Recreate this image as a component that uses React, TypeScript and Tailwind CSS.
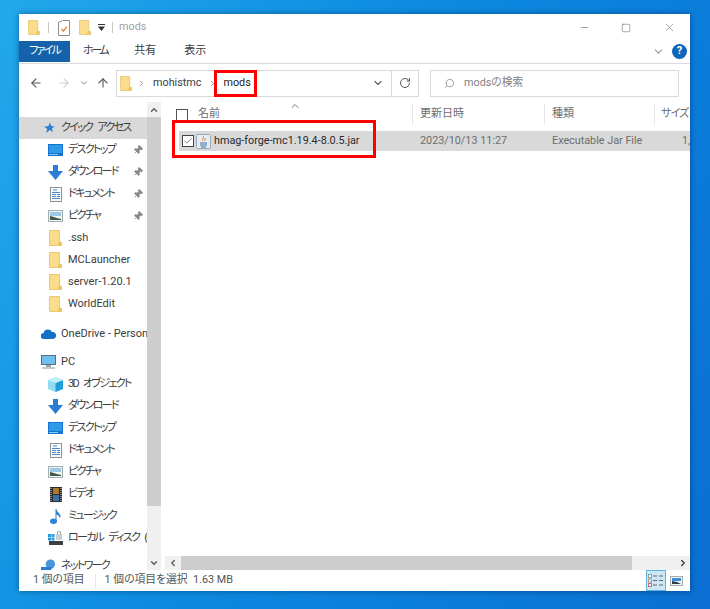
import React from 'react';
import { ArrowLeft, ArrowRight, ArrowUp, ChevronDown, ChevronLeft, ChevronRight, ChevronUp, Minus, Square, X, RotateCw, Search, Pin, Check } from 'lucide-react';

const Folder = ({ className = 'w-[13px] h-[16px]' }: { className?: string }) => (
  <svg viewBox="0 0 13 16" className={className}>
    <path d="M0.5 0.5h10v12h2v3h-12z" fill="#fbdc8a" stroke="#e6c877" />
    <path d="M10.5 11l2 1.5h-2z" fill="#e2b94f" />
    <rect x="9" y="12.5" width="3.5" height="3" fill="#eec45f" />
  </svg>
);

const Star = () => (
  <svg viewBox="0 0 12 12" className="w-[12px] h-[12px]">
    <path d="M7 0.5l1.2 3.5 3.5 0.2-2.8 2.3 1 3.6L6.8 8 3.2 11l1-4L1 4.5l4.3-0.3z" fill="#2d7fd3" />
  </svg>
);

const Desktop = () => (
  <svg viewBox="0 0 15 12" className="w-[15px] h-[12px]">
    <rect x="0" y="0" width="15" height="12" fill="#1673cf" />
    <rect x="1" y="1" width="13" height="8" fill="#2f9be8" />
    <rect x="1" y="10" width="9" height="1" fill="#8cc8f2" />
  </svg>
);

const Download = () => (
  <svg viewBox="0 0 15 15" className="w-[15px] h-[15px]">
    <path d="M5 0h5v6h5l-7.5 9L0 6h5z" fill="#2b7cd3" />
  </svg>
);

const Doc = () => (
  <svg viewBox="0 0 12 15" className="w-[12px] h-[15px]">
    <rect x="0.5" y="0.5" width="11" height="14" fill="#f7f9fb" stroke="#8d9299" />
    <path d="M3 3h4M2 5.5h8M2 7.5h4M7 7.5h3M2 9.5h4M7 9.5h3M2 11.5h8" stroke="#4a87c6" strokeWidth="1" />
  </svg>
);

const Picture = () => (
  <svg viewBox="0 0 15 12" className="w-[15px] h-[12px]">
    <rect x="0.5" y="0.5" width="14" height="11" fill="#f2f3f4" stroke="#a6abb0" />
    <rect x="2" y="2" width="11" height="4" fill="#9cc8e8" />
    <path d="M2 6l4 1 3 1 4 1v1H2z" fill="#3f5d44" />
  </svg>
);

const Cloud = () => (
  <svg viewBox="0 0 15 10" className="w-[15px] h-[10px]">
    <path d="M3 10a3 3 0 0 1-.4-6A4.5 4.5 0 0 1 11 3a3.5 3.5 0 0 1 1 7z" fill="#1372c8" />
  </svg>
);

const Pc = () => (
  <svg viewBox="0 0 15 14" className="w-[15px] h-[14px]">
    <rect x="0.5" y="0.5" width="14" height="9" fill="#6fc0f0" stroke="#5a6d80" />
    <rect x="5" y="10" width="5" height="2" fill="#9aa5ae" />
    <rect x="1" y="12" width="13" height="2" fill="#c3cad0" />
  </svg>
);

const Cube = () => (
  <svg viewBox="0 0 15 15" className="w-[15px] h-[15px]">
    <path d="M7.5 0L15 3v9l-7.5 3L0 12V3z" fill="#8fdcf2" />
    <path d="M7.5 6L15 3v9l-7.5 3z" fill="#1e9fd8" />
    <path d="M7.5 0L15 3 7.5 6 0 3z" fill="#c4eef8" />
  </svg>
);

const Video = () => (
  <svg viewBox="0 0 12 15" className="w-[12px] h-[15px]">
    <rect width="12" height="15" fill="#2a2a2a" />
    <rect x="3" y="1" width="6" height="6" fill="#b07a2c" />
    <rect x="3" y="8" width="6" height="6" fill="#3f6ea8" />
    <path d="M1 1v13M11 1v13" stroke="#ddd" strokeDasharray="1 1" />
  </svg>
);

const Music = () => (
  <svg viewBox="0 0 11 15" className="w-[11px] h-[15px]">
    <ellipse cx="3.5" cy="12.3" rx="3.5" ry="2.7" fill="#2b82d9" />
    <path d="M5.5 12V0h1c0 3 4 4 4 7.5 0 1-.3 1.5-.7 2 0-2.5-2-3.5-3.3-4V12z" fill="#2b82d9" />
  </svg>
);

const Disk = () => (
  <svg viewBox="0 0 15 14" className="w-[15px] h-[14px]">
    <rect x="0" y="3" width="3" height="3" fill="#2b9be0" />
    <rect x="3.5" y="3" width="3" height="3" fill="#2b9be0" />
    <rect x="0" y="6.5" width="3" height="3" fill="#2b9be0" />
    <rect x="3.5" y="6.5" width="3" height="3" fill="#2b9be0" />
    <rect x="8" y="3" width="6" height="6" fill="#c9ced3" />
    <path d="M9.5 3V1.5a1.5 1.5 0 0 1 3 0V3" fill="none" stroke="#8c9299" />
    <rect x="1" y="10" width="14" height="4" fill="#3b3f44" />
  </svg>
);

const Network = () => (
  <svg viewBox="0 0 16 14" className="w-[16px] h-[14px]">
    <circle cx="10" cy="5" r="5" fill="#4a95d8" />
    <rect x="0" y="8" width="11" height="6" fill="#2b7cd3" />
  </svg>
);

const JarIcon = () => (
  <svg viewBox="0 0 15 15" className="w-[15px] h-[15px]">
    <rect x="0.5" y="0.5" width="14" height="14" rx="1" fill="#e6edf4" stroke="#9aa8b6" />
    <path d="M7 2c2 2-2 3 0 5M9 4c1 1-1 2 0 3" fill="none" stroke="#d9822b" />
    <path d="M4 9h7M4 11h7M5 13h5" stroke="#3d6ea5" />
  </svg>
);

const DetailsViewIcon = () => (
  <svg viewBox="0 0 16 13" className="w-[16px] h-[13px]">
    <rect x="0.5" y="0.5" width="3" height="3" fill="#fff" stroke="#999" />
    <rect x="0.5" y="5" width="3" height="3" fill="#fff" stroke="#999" />
    <rect x="0.5" y="9.5" width="3" height="3" fill="#fff" stroke="#d66" />
    <path d="M5 2h4M11 2h4M5 6.5h4M11 6.5h4M5 11h4M11 11h4" stroke="#666" />
  </svg>
);

const LargeViewIcon = () => (
  <svg viewBox="0 0 13 10" className="w-[13px] h-[10px]">
    <rect x="0.5" y="0.5" width="12" height="9" fill="#f2f3f4" stroke="#a6abb0" />
    <rect x="2" y="2" width="9" height="3" fill="#3d8fd8" />
    <path d="M2 5l5 1 4 2H2z" fill="#2f3f4c" />
  </svg>
);

type NavItem = { label: string; icon: React.ReactNode; pin?: boolean; kana?: boolean };

const quickItems: NavItem[] = [
  { label: 'デスクトップ', icon: <Desktop />, pin: true, kana: true },
  { label: 'ダウンロード', icon: <Download />, pin: true, kana: true },
  { label: 'ドキュメント', icon: <Doc />, pin: true, kana: true },
  { label: 'ピクチャ', icon: <Picture />, pin: true, kana: true },
  { label: '.ssh', icon: <Folder /> },
  { label: 'MCLauncher', icon: <Folder /> },
  { label: 'server-1.20.1', icon: <Folder /> },
  { label: 'WorldEdit', icon: <Folder /> },
];

const pcItems: NavItem[] = [
  { label: '3D オブジェクト', icon: <Cube />, kana: true },
  { label: 'ダウンロード', icon: <Download />, kana: true },
  { label: 'デスクトップ', icon: <Desktop />, kana: true },
  { label: 'ドキュメント', icon: <Doc />, kana: true },
  { label: 'ピクチャ', icon: <Picture />, kana: true },
  { label: 'ビデオ', icon: <Video />, kana: true },
  { label: 'ミュージック', icon: <Music />, kana: true },
  { label: 'ローカル ディスク (C:)', icon: <Disk />, kana: true },
];

const NavRow = ({ label, icon, pin, kana }: NavItem) => (
  <div className="flex items-center h-[22px] pl-[29px] text-[#3c3c3c]">
    <span className="w-[15px] flex justify-center shrink-0">{icon}</span>
    <span className={`ml-[5px] pt-px whitespace-pre flex-1 text-[11px] ${kana ? 'tracking-[-1.7px] [word-spacing:4px]' : ''}`}>{label}</span>
    {pin && <Pin size={10} className="mr-[4px] text-[#8a8a8a] rotate-45" fill="#8a8a8a" />}
  </div>
);

const TopRow = ({ label, icon, active, kana }: { label: string; icon: React.ReactNode; active?: boolean; kana?: boolean }) => (
  <div className={`flex items-center h-[22px] pl-[22px] text-[#3c3c3c] ${active ? 'bg-[#d9d9d9]' : ''}`}>
    <span className="w-[15px] flex justify-center shrink-0">{icon}</span>
    <span className={`ml-[5px] pt-px whitespace-pre text-[11px] ${kana ? 'tracking-[-1.7px] [word-spacing:4px]' : ''}`}>{label}</span>
  </div>
);

export default function App() {
  return (
    <div
      className="w-[710px] h-[609px] overflow-hidden pl-[19px] pt-[14px] bg-[linear-gradient(115deg,#22a8ec_0%,#0c8ae0_45%,#0a6fd2_100%)] text-[10.8px] [font-family:'Roboto','Noto_Sans_CJK_JP',sans-serif] [font-feature-settings:'palt']"
    >
      <div className="w-[671px] h-[577px] bg-white flex flex-col shadow-[0_0_6px_rgba(0,0,40,0.4)]">
        {/* title bar */}
        <div className="h-[27px] flex items-center shrink-0 pl-[9px]">
          <Folder className="w-[12px] h-[15px]" />
          <div className="w-px h-[11px] bg-[#c8c8c8] ml-[8px]" />
          <svg viewBox="0 0 12 16" className="w-[12px] h-[16px] ml-[9px]">
            <path d="M0.5 2.5l4-2h7v15h-11z" fill="#fff" stroke="#8d8d8d" />
            <path d="M3.5 9l2 2 3.5-4.5" fill="none" stroke="#d9762b" strokeWidth="1.2" />
          </svg>
          <Folder className="w-[12px] h-[15px] ml-[9px]" />
          <svg viewBox="0 0 7 7" className="w-[7px] h-[7px] ml-[7px]">
            <path d="M0 0h7v1H0zM0 2.5h7L3.5 7z" fill="#333" />
          </svg>
          <div className="w-px h-[11px] bg-[#c8c8c8] ml-[7px]" />
          <span className="ml-[6px] text-[#a0a0a0]">mods</span>
          <div className="flex-1" />
          <Minus size={11} className="text-[#9a9a9a] mr-[31px]" />
          <Square size={10} strokeWidth={1.2} className="text-[#555] mr-[32px]" />
          <X size={13} strokeWidth={1.1} className="text-[#777] mr-[14px]" />
        </div>

        {/* ribbon tabs */}
        <div className="h-[23px] flex items-center shrink-0 border-b border-[#dadbdc] pb-px">
          <div className="w-[51px] h-[21px] flex items-center justify-center bg-[#1562ab] text-white text-[11px] tracking-[-1.8px]">ファイル</div>
          <span className="ml-[13px] text-[#3c3c3c] text-[11px] tracking-[-2.4px]">ホーム</span>
          <span className="ml-[27px] text-[#3c3c3c] text-[11px]">共有</span>
          <span className="ml-[28px] text-[#3c3c3c] text-[11px]">表示</span>
          <div className="flex-1" />
          <ChevronDown size={13} className="text-[#9a9a9a] mr-[7px]" />
          <div className="w-[15px] h-[15px] rounded-full bg-[#0f66b8] text-white text-[11px] font-bold flex items-center justify-center mr-[3px]">?</div>
        </div>

        {/* address row */}
        <div className="h-[38px] flex items-center shrink-0">
          <ArrowLeft size={14} className="ml-[10px] text-[#5c5c5c]" />
          <ArrowRight size={14} className="ml-[14px] text-[#cfcfcf]" />
          <ChevronDown size={10} className="ml-[8px] text-[#6c6c6c]" />
          <ArrowUp size={14} className="ml-[7px] text-[#5c5c5c]" />
          <div className="ml-[6px] w-[303px] h-[27px] flex items-center border border-[#d9d9d9]">
            <Folder className="w-[12px] h-[15px] ml-[3px]" />
            <ChevronRight size={9} className="ml-[5px] text-[#777]" />
            <span className="ml-[7px] text-[#3c3c3c]">mohistmc</span>
            <ChevronRight size={9} className="ml-[7px] text-[#777]" />
            <span className="relative ml-[6px] text-[#222] leading-[16px]">
              mods
              <div className="absolute -left-[9px] -right-[6px] -top-[5px] -bottom-[6px] border-[3px] border-[#ff0000]" />
            </span>
            <div className="flex-1" />
            <ChevronDown size={12} strokeWidth={2.5} className="text-[#666] mr-[7px]" />
            <div className="w-px h-full bg-[#d9d9d9]" />
            <RotateCw size={12} className="text-[#555] mx-[7px]" />
          </div>
          <div className="ml-[11px] w-[249px] h-[27px] flex items-center border border-[#d9d9d9]">
            <Search size={11} className="ml-[13px] text-[#999] -scale-x-100" />
            <span className="ml-[9px] text-[#7f7f7f]">modsの検索</span>
          </div>
        </div>

        {/* body */}
        <div className="flex flex-1 min-h-0">
          <div className="flex shrink-0">
            <div className="w-[128px] pt-[15px] overflow-hidden">
              <TopRow label="クイック アクセス" icon={<Star />} active kana />
              <div>
                {quickItems.map((item) => (
                  <NavRow key={item.label} {...item} />
                ))}
              </div>
              <div className="mt-[8px]">
                <TopRow label="OneDrive - Personal" icon={<Cloud />} />
              </div>
              <div className="mt-[6px]">
                <TopRow label="PC" icon={<Pc />} />
              </div>
              {pcItems.map((item) => (
                <NavRow key={item.label} {...item} />
              ))}
              <div className="mt-[6px]">
                <TopRow label="ネットワーク" icon={<Network />} kana />
              </div>
            </div>
            <div className="w-[14px] bg-[#f0f0f0] flex flex-col">
              <div className="h-[15px] flex items-center justify-center">
                <ChevronUp size={10} strokeWidth={3} className="text-[#555]" />
              </div>
              <div className="h-[389px] bg-[#cdcdcd]" />
              <div className="flex-1" />
              <div className="h-[14px] flex items-center justify-center">
                <ChevronDown size={10} strokeWidth={3} className="text-[#555]" />
              </div>
            </div>
          </div>

          <div className="ml-[4px] flex-1 min-w-0 flex flex-col">
            {/* column headers */}
            <div className="relative h-[23px] pt-[2px] flex text-[#6d6d6d] text-[11px] shrink-0 overflow-hidden">
              <ChevronUp size={12} className="absolute left-[124px] -top-[2px] text-[#777]" />
              <div className="w-[248px] shrink-0 flex items-center pl-[11px] border-r border-[#e5e5e5]">
                <span className="w-[12px] h-[12px] border border-[#555] shrink-0" />
                <span className="ml-[10px]">名前</span>
              </div>
              <div className="w-[132px] shrink-0 flex items-center pl-[7px] border-r border-[#e5e5e5]">更新日時</div>
              <div className="w-[110px] shrink-0 flex items-center pl-[7px] border-r border-[#e5e5e5]">種類</div>
              <div className="flex-1 flex items-center pl-[6px] whitespace-nowrap tracking-[-0.8px]">サイズ</div>
            </div>

            {/* file row */}
            <div className="relative mt-[6px] ml-[14px] h-[20px] flex items-center bg-[#d9d9d9] shrink-0">
              <span className="ml-[3px] w-[12px] h-[12px] border border-[#444] bg-white flex items-center justify-center shrink-0">
                <Check size={10} strokeWidth={1.5} className="text-[#333]" />
              </span>
              <span className="ml-[2px]"><JarIcon /></span>
              <span className="ml-[3px] w-[206px] text-[#2b2b2b] whitespace-nowrap shrink-0">hmag-forge-mc1.19.4-8.0.5.jar</span>
              <span className="w-[132px] text-[#6d6d6d] shrink-0">2023/10/13 11:27</span>
              <span className="w-[130px] text-[#6d6d6d] shrink-0">Executable Jar File</span>
              <span className="text-[#6d6d6d]">1,</span>
              <div className="absolute left-[-7px] w-[204px] -top-[11px] -bottom-[7px] border-[3px] border-[#ff0000]" />
            </div>

            <div className="flex-1" />

            {/* horizontal scrollbar */}
            <div className="h-[14px] flex bg-[#f0f0f0] shrink-0">
              <div className="w-[16px] flex items-center justify-center">
                <ChevronLeft size={10} strokeWidth={3} className="text-[#555]" />
              </div>
              <div className="w-[451px] bg-[#cdcdcd]" />
              <div className="flex-1 flex items-center justify-end pr-[2px]">
                <ChevronRight size={10} strokeWidth={3} className="text-[#333]" />
              </div>
            </div>
          </div>
        </div>

        {/* status bar */}
        <div className="h-[21px] flex items-center shrink-0 text-[#555]">
          <span className="ml-[14px]">1 個の項目</span>
          <div className="ml-[10px] w-px h-[14px] bg-[#e8e8e8]" />
          <span className="ml-[9px]">1 個の項目を選択&nbsp;&nbsp;1.63 MB</span>
          <div className="flex-1" />
          <div className="w-[20px] h-[21px] flex items-center justify-center bg-[#cce8f7] border border-[#5fb3e0]">
            <DetailsViewIcon />
          </div>
          <div className="ml-[4px] mr-[7px]">
            <LargeViewIcon />
          </div>
        </div>
      </div>
    </div>
  );
}
